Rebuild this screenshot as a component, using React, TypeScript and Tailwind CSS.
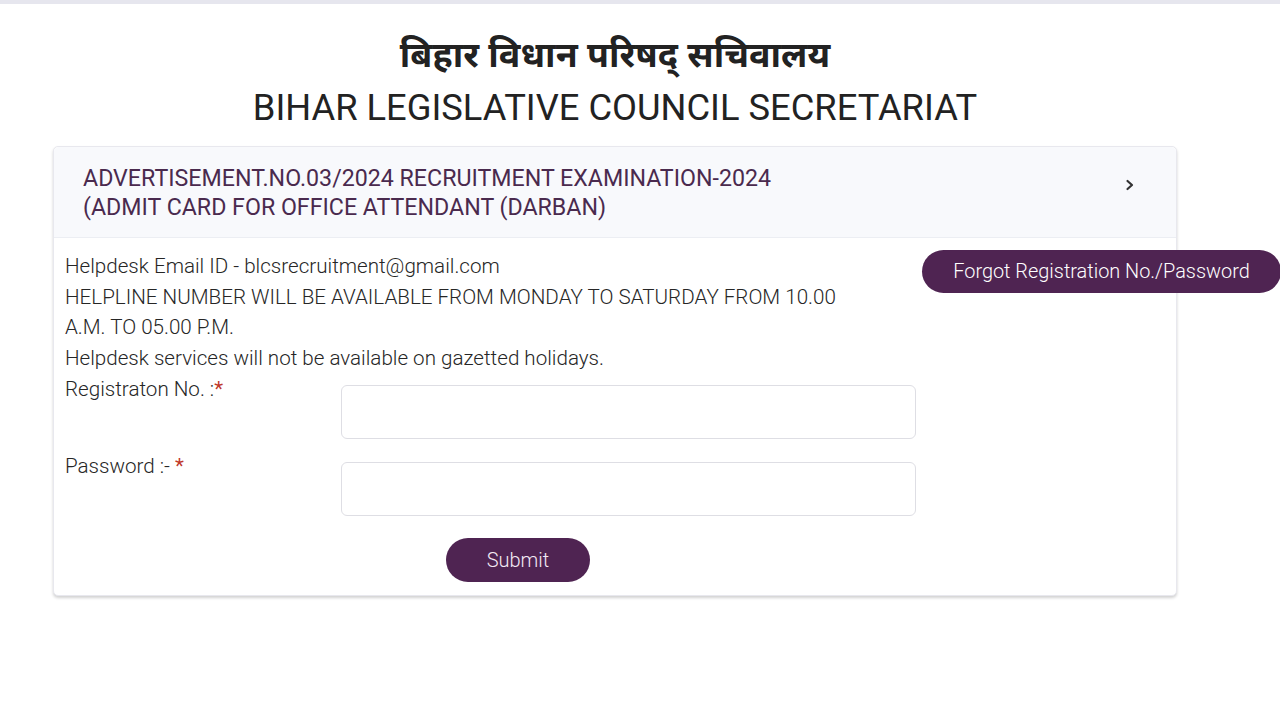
import React from 'react';

const App: React.FC = () => {
  return (
    <div className="min-h-screen w-full bg-white overflow-hidden" style={{ fontFamily: 'Roboto, "Noto Sans Devanagari", "Noto Sans", sans-serif' }}>
      {/* Top strip */}
      <div className="h-[4px] w-full bg-[#e6e6ee]" />

      <div className="w-[1124px] ml-[53px]">
        {/* Headings */}
        <div className="text-center text-[#222]">
          <h1
            className="pt-[30px] text-[35.8px] leading-[50px] font-bold"
            style={{ fontFamily: '"Noto Sans Devanagari", "Lohit Devanagari", "Noto Sans", sans-serif' }}
          >
            बिहार विधान परिषद् सचिवालय
          </h1>
          <h2 className="mt-[2px] text-[36.3px] leading-[44px] font-normal">
            BIHAR LEGISLATIVE COUNCIL SECRETARIAT
          </h2>
        </div>

        {/* Card */}
        <div className="mt-[16px] rounded-[5px] border border-[#e8e8ee] shadow-[0_2px_3px_rgba(0,0,0,0.18)] bg-white">
          <div className="h-[91px] bg-[#f8f9fc] border-b border-[#eceef3] rounded-t-[5px] pl-[29px] pr-[38px] flex items-center justify-between">
            <div className="text-[23.2px] leading-[29px] text-[#4a2a4e] pt-[1px]">
              <div>ADVERTISEMENT.NO.03/2024 RECRUITMENT EXAMINATION-2024</div>
              <div>(ADMIT CARD FOR OFFICE ATTENDANT (DARBAN)</div>
            </div>
            <svg width="12" height="14" viewBox="0 0 12 14" className="mb-[14px] mr-[2px]">
              <path d="M3.5 3 L8 7 L3.5 11" fill="none" stroke="#333" strokeWidth="2.2" strokeLinecap="round" strokeLinejoin="round" />
            </svg>
          </div>

          <div className="flex pl-[11px] pb-[13px]">
            {/* Left column */}
            <div className="w-[851px] pt-[13px]">
              <div className="text-[20.6px] leading-[30.7px] font-light text-[#262626] w-[800px]">
                <p>Helpdesk Email ID - blcsrecruitment@gmail.com</p>
                <p>HELPLINE NUMBER WILL BE AVAILABLE FROM MONDAY TO SATURDAY FROM 10.00 A.M. TO 05.00 P.M.</p>
                <p>Helpdesk services will not be available on gazetted holidays.</p>
              </div>

              <div className="flex">
                <label className="w-[276px] text-[20.6px] leading-[30px] font-light text-[#262626]">
                  Registraton No. :<span className="text-[#c0392b] font-normal">*</span>
                </label>
                <input type="text" className="mt-[11px] w-[575px] h-[54px] rounded-[6px] border border-[#dedee4] bg-white outline-none" />
              </div>

              <div className="flex mt-[12px]">
                <label className="w-[276px] text-[20.6px] leading-[30px] font-light text-[#262626]">
                  Password :- <span className="text-[#c0392b] font-normal">*</span>
                </label>
                <input type="password" className="mt-[11px] w-[575px] h-[54px] rounded-[6px] border border-[#dedee4] bg-white outline-none" />
              </div>

              <div className="mt-[22px] pl-[381px]">
                <button className="w-[144px] h-[44px] rounded-full bg-[#4f2452] text-[#f3e9f4] text-[20px] font-light">
                  Submit
                </button>
              </div>
            </div>

            {/* Right column */}
            <div className="pt-[12px] pl-[6px]">
              <button className="whitespace-nowrap h-[43px] w-[359px] rounded-full bg-[#4f2452] text-white text-[19.9px] font-light">
                Forgot Registration No./Password
              </button>
            </div>
          </div>
        </div>
      </div>
    </div>
  );
};

export default App;
